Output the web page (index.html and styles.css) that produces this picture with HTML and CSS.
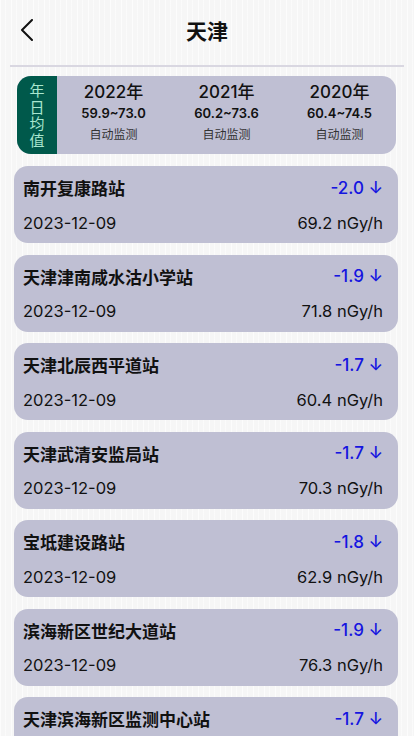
FILE: index.html
```html
<!DOCTYPE html>
<html lang="zh-CN">
<head>
    <meta charset="UTF-8">
    <meta name="viewport" content="width=device-width, initial-scale=1.0">
    <title>天津</title>
    <link rel="stylesheet" href="styles.css">
</head>
<body>
    <div class="page">
        <header class="nav-bar">
            <span class="back">
                <svg width="14" height="22" viewBox="0 0 14 22">
                    <path d="M12 1 L2 11 L12 21" fill="none" stroke="#111" stroke-width="2" stroke-linecap="round" stroke-linejoin="round"/>
                </svg>
            </span>
            <h1 class="title">天津</h1>
        </header>
        <div class="divider"></div>

        <div class="summary">
            <div class="summary-label">
                <span class="label-text">年日均值</span>
            </div>
            <div class="summary-col">
                <div class="year">2022年</div>
                <div class="range">59.9~73.0</div>
                <div class="source">自动监测</div>
            </div>
            <div class="summary-col">
                <div class="year">2021年</div>
                <div class="range">60.2~73.6</div>
                <div class="source">自动监测</div>
            </div>
            <div class="summary-col">
                <div class="year">2020年</div>
                <div class="range">60.4~74.5</div>
                <div class="source">自动监测</div>
            </div>
        </div>

        <div class="station-list">
            <div class="station">
                <div class="row">
                    <span class="name">南开复康路站</span>
                    <span class="change">-2.0 ↓</span>
                </div>
                <div class="row">
                    <span class="date">2023-12-09</span>
                    <span class="dose">69.2 nGy/h</span>
                </div>
            </div>
            <div class="station">
                <div class="row">
                    <span class="name">天津津南咸水沽小学站</span>
                    <span class="change">-1.9 ↓</span>
                </div>
                <div class="row">
                    <span class="date">2023-12-09</span>
                    <span class="dose">71.8 nGy/h</span>
                </div>
            </div>
            <div class="station">
                <div class="row">
                    <span class="name">天津北辰西平道站</span>
                    <span class="change">-1.7 ↓</span>
                </div>
                <div class="row">
                    <span class="date">2023-12-09</span>
                    <span class="dose">60.4 nGy/h</span>
                </div>
            </div>
            <div class="station">
                <div class="row">
                    <span class="name">天津武清安监局站</span>
                    <span class="change">-1.7 ↓</span>
                </div>
                <div class="row">
                    <span class="date">2023-12-09</span>
                    <span class="dose">70.3 nGy/h</span>
                </div>
            </div>
            <div class="station">
                <div class="row">
                    <span class="name">宝坻建设路站</span>
                    <span class="change">-1.8 ↓</span>
                </div>
                <div class="row">
                    <span class="date">2023-12-09</span>
                    <span class="dose">62.9 nGy/h</span>
                </div>
            </div>
            <div class="station">
                <div class="row">
                    <span class="name">滨海新区世纪大道站</span>
                    <span class="change">-1.9 ↓</span>
                </div>
                <div class="row">
                    <span class="date">2023-12-09</span>
                    <span class="dose">76.3 nGy/h</span>
                </div>
            </div>
            <div class="station">
                <div class="row">
                    <span class="name">天津滨海新区监测中心站</span>
                    <span class="change">-1.7 ↓</span>
                </div>
            </div>
        </div>
    </div>
</body>
</html>
```

FILE: styles.css
```css
:root {
    --page-bg: #f6f6f6;
    --card-bg: #bfbfd3;
    --label-bg: #00594b;
    --label-text: #a9e6cf;
    --text: #111111;
    --muted: #333333;
    --blue: #1515e0;
}

* {
    box-sizing: border-box;
}

body {
    margin: 0;
    background-color: var(--page-bg);
    background-image: repeating-linear-gradient(90deg,
        rgba(255, 255, 255, 0.7) 0 1px,
        transparent 1px 5px,
        rgba(255, 255, 255, 0.5) 5px 6px,
        transparent 6px 11px);
    font-family: Inter, "Noto Sans CJK SC", sans-serif;
    color: var(--text);
    height: 736px;
    overflow: hidden;
}

.page {
    width: 414px;
}

.nav-bar {
    height: 65px;
    display: flex;
    align-items: center;
    justify-content: center;
    position: relative;
}

.back {
    position: absolute;
    left: 20px;
    top: 19px;
    display: flex;
}

.title {
    margin: 0 0 4px 0;
    font-family: "Noto Sans CJK SC", sans-serif;
    font-size: 21px;
    font-weight: 700;
    line-height: 1;
}

.divider {
    height: 2px;
    margin: 0 10px 0 10px;
    background-color: #d9d7e1;
}

.summary {
    margin: 9px 18px 0 17px;
    height: 78px;
    background-color: var(--card-bg);
    border-radius: 14px;
    overflow: hidden;
    display: flex;
}

.summary-label {
    width: 40px;
    background-color: var(--label-bg);
    color: var(--label-text);
    display: flex;
    align-items: center;
    justify-content: center;
}

.label-text {
    writing-mode: vertical-rl;
    text-orientation: upright;
    font-family: "Noto Sans CJK SC", sans-serif;
    font-size: 15px;
    letter-spacing: 1.5px;
    line-height: 1;
    padding-top: 1px;
}

.summary-col {
    flex: 1;
    display: flex;
    flex-direction: column;
    align-items: center;
    padding-top: 6px;
}

.year {
    font-size: 17px;
    font-weight: 500;
    line-height: 20px;
}

.range {
    font-size: 13px;
    font-weight: 600;
    line-height: 16px;
    margin-top: 3px;
}

.source {
    font-family: "Noto Sans CJK SC", sans-serif;
    font-size: 12px;
    color: var(--muted);
    line-height: 16px;
    margin-top: 5px;
}

.station-list {
    margin: 12px 16px 0 14px;
    display: flex;
    flex-direction: column;
    gap: 11.5px;
}

.station {
    height: 77px;
    flex-shrink: 0;
    background-color: var(--card-bg);
    border-radius: 14px;
    padding: 11px 15px 0 9px;
    display: flex;
    flex-direction: column;
    gap: 14px;
}

.row {
    display: flex;
    justify-content: space-between;
    align-items: center;
    height: 21px;
}

.name {
    font-family: "Noto Sans CJK SC", sans-serif;
    font-size: 17px;
    font-weight: 600;
}

.change {
    font-size: 17px;
    font-weight: 500;
    color: var(--blue);
}

.date,
.dose {
    font-size: 16.5px;
}
```
